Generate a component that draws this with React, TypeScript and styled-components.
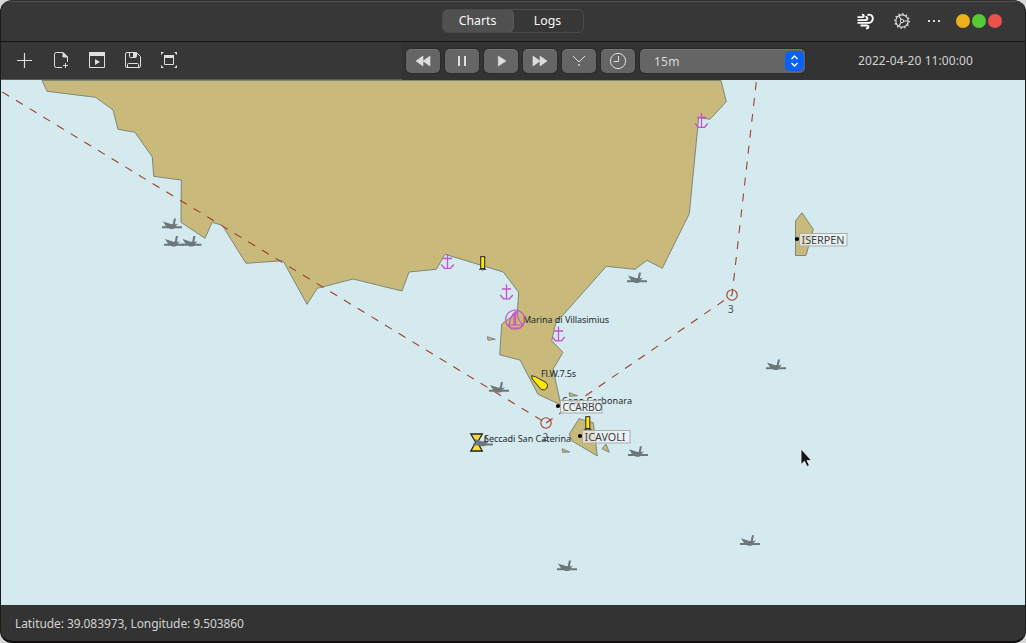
import React from "react";
import styled, { createGlobalStyle } from "styled-components";

const Global = createGlobalStyle`
  html, body { margin: 0; padding: 0; background: #d8d8d8; }
  body { overflow: hidden; font-family: "Noto Sans", sans-serif; font-size: 12px; color: #dcdcdc; }
  svg { display: block; }
`;

const Window = styled.div`
  box-sizing: border-box;
  width: 1026px;
  height: 643px;
  display: flex;
  flex-direction: column;
  background: #333333;
  border: 1px solid #1b1b1b;
  border-top-color: #303030;
  border-bottom: 2px solid #100d0f;
  border-radius: 12px;
  overflow: hidden;
`;

const TitleBar = styled.header`
  box-sizing: border-box;
  height: 41px;
  flex: none;
  display: grid;
  grid-template-columns: 1fr 142px 1fr;
  align-items: center;
  padding-bottom: 1px;
  background: #373737;
  border-top: 1px solid #505050;
  border-bottom: 1px solid #141414;
`;

const Segmented = styled.div`
  grid-column: 2;
  box-sizing: border-box;
  display: flex;
  height: 24px;
  border: 1px solid #4b4b4b;
  border-radius: 6px;
  overflow: hidden;
`;

const Segment = styled.button<{ $active?: boolean }>`
  flex: 1;
  padding: 0 1px 1px 0;
  border: 0;
  font: inherit;
  font-size: 12.3px;
  line-height: 20px;
  color: #fafafa;
  background: ${(p) => (p.$active ? "#505050" : "transparent")};
  border-radius: ${(p) => (p.$active ? "5px" : "0")};
  box-shadow: ${(p) => (p.$active ? "0 0 0 1px #5c5c5c" : "none")};
`;

const TitleActions = styled.div`
  display: flex;
  align-items: center;
  justify-content: flex-end;
  padding-right: 23px;
`;

const Glyph = styled.span<{ $gap: number }>`
  margin-right: ${(p) => p.$gap}px;
`;

const WindowDot = styled.i<{ $color: string }>`
  width: 14px;
  height: 14px;
  margin-left: 2px;
  border-radius: 50%;
  background: ${(p) => p.$color};
`;

const ToolBar = styled.div`
  display: flex;
  flex: none;
  height: 38px;
  background: #333333;
`;

const FileTools = styled.div`
  box-sizing: border-box;
  display: flex;
  align-items: center;
  gap: 18px;
  width: 401px;
  padding: 0 0 1px 15px;
  background: #373737;
  border-bottom: 1px solid #5b5d5d;
`;

const Playback = styled.div`
  display: flex;
  align-items: center;
  gap: 5px;
  padding: 0 0 0 4px;
`;

const PlayButton = styled.button`
  box-sizing: border-box;
  width: 34px;
  height: 24px;
  padding: 0 0 1px;
  display: flex;
  align-items: center;
  justify-content: center;
  border: 0;
  border-top: 1px solid #757575;
  border-radius: 5px;
  background: #656565;
  box-shadow: 0 0 0 1px #2b2b2b;
`;

const Select = styled.div`
  box-sizing: border-box;
  display: flex;
  align-items: center;
  justify-content: space-between;
  width: 165px;
  height: 24px;
  padding: 0 1px 1px 14px;
  border-top: 1px solid #757575;
  border-radius: 5px;
  background: #656565;
  box-shadow: 0 0 0 1px #2b2b2b;
  color: #d8d8d8;
  letter-spacing: 0.2px;
`;

const Stepper = styled.span`
  display: flex;
  align-items: center;
  justify-content: center;
  width: 19px;
  height: 20px;
  border-radius: 5px;
  background: #0a62f5;
`;

const Clock = styled.time`
  align-self: center;
  margin-left: 53px;
  padding-bottom: 2px;
  letter-spacing: 0.08px;
  color: #d2d2d2;
`;

const Chart = styled.main`
  flex: none;
  height: 525px;
  background: #d5eaef;
  font-family: "Noto Sans", sans-serif;
`;

const Status = styled.footer`
  flex: 1;
  display: flex;
  align-items: center;
  padding-left: 14px;
  letter-spacing: -0.08px;
  color: #d2d2d2;
`;

const Icon = ({ children, w = 18, h = 18 }: { children: React.ReactNode; w?: number; h?: number }) => (
  <svg width={w} height={h} viewBox={`0 0 ${w} ${h}`} fill="none" stroke="#dedede" strokeWidth="1">
    {children}
  </svg>
);

const Wreck = ({ x, y }: { x: number; y: number }) => (
  <g transform={`translate(${x} ${y})`} fill="#6c777a">
    <path d="M-10-.8H-6L-9-5.4L-.5-2.8L.8-3L1.9-8.5H4L2.8-2.6L6-3.2L3.6-.8H10V1.2H3L1 2H-2L-3 1.2H-10Z" />
  </g>
);

const Anchor = ({ x, y }: { x: number; y: number }) => (
  <path
    transform={`translate(${x} ${y})`}
    d="M0-7.5V7.3M-4.6-3H4.6M-6.3 3L-3 6.8H3L6.3 3"
    fill="none"
    stroke="#c552c9"
    strokeWidth="1.3"
  />
);

const Beacon = ({ x, y }: { x: number; y: number }) => (
  <g transform={`translate(${x} ${y})`} stroke="#222" strokeWidth="1">
    <path d="M-3.6 13.4H3.6" strokeWidth=".9" />
    <circle cx="0" cy="13" r="1.2" fill="#d5eaef" strokeWidth=".8" />
    <rect x="-2" y=".7" width="4" height="11.8" fill="#ffe800" />
  </g>
);

const Waypoint = ({ x, y, w, textW, name }: { x: number; y: number; w: number; textW: number; name: string }) => (
  <g>
    <circle cx={x} cy={y} r="2.1" fill="#050505" />
    <rect x={x + 2.5} y={y - 5.5} width={w} height="12.5" fill="#f4f4f4" fillOpacity=".7" stroke="#a5adae" strokeWidth="1" />
    <text x={x + 4.5} y={y + 5} fontSize="11.3" fill="#3a4144" textLength={textW} lengthAdjust="spacingAndGlyphs">{name}</text>
  </g>
);

const wrecks = [
  [172, 227], [174, 244.5], [191.5, 244.5], [637, 281], [499, 390.5], [776, 368],
  [750, 543.7], [638, 454.7], [567, 569],
];

const land = [
  "42,80.5 47,91.3 95.7,97.3 113,110 118,129.3 135,132.3 152.3,157 153.7,176.3 181.3,180 181,222.3 205,238.3 212,222.3 222.3,225.3 246,263.3 283,260.7 307,304.3 317.3,288.3 353,279 402,291 409,272 436.3,269.3 445,254.3 503.3,272 518.7,292.3 517.3,312.3 501.7,324 499.7,354.8 520,360 538,394.3 561,405 553,369.3 563,352.3 551.7,340.7 555.7,323.3 606.3,266.3 635,269.3 647,260.3 662.3,268.3 689.3,213.7 698.7,117.7 710,119.3 726.3,101.7 721,80.5",
  "795.5,220.7 802,212.7 813.3,229.3 806,255.5 795.5,255.5",
  "569.3,434 579,418.7 593.3,422.7 597.3,456 571.7,440.7",
  "562,448.7 569.7,452 562.7,452.3",
  "606,444 609.3,452.3 602,448.7",
  "569,392.7 577.7,395.7 569.7,396.3",
  "487.3,336.7 495.3,339.3 488,340.3",
];

export default function App() {
  return (
    <>
      <Global />
      <Window>
        <TitleBar>
          <Segmented>
            <Segment $active>Charts</Segment>
            <Segment>Logs</Segment>
          </Segmented>
          <TitleActions>
            <Glyph $gap={20}>
              <Icon w={17} h={17}>
                <g stroke="#fff" strokeWidth="1.8">
                  <path d="M.5 4.2H5.2Q7 4 6.8 2.6Q6.5 1.4 4.9 1.8" />
                  <path d="M.5 7.2H8.6Q10.6 6.9 10.4 5Q10 3.6 8.4 4" />
                  <path d="M10.4 2.4Q12 1.2 13.8 2Q16 3.2 15.8 6Q15.4 9 12.4 9.8H.5" />
                  <path d="M3.5 12.5H9.8Q11.6 12.8 11.4 14.4Q10.8 15.9 9 15.2" />
                </g>
              </Icon>
            </Glyph>
            <Glyph $gap={16}>
              <Icon w={16} h={16}>
                <circle cx="8" cy="8" r="6.2" strokeWidth="1.2" />
                <circle cx="8" cy="8" r="7.2" strokeDasharray="1.4 2.37" strokeWidth="1.4" />
                <circle cx="8" cy="8" r="1.7" />
                <path d="M9.7 8H14M7.1 6.5L4.8 2.7M7.1 9.5L4.8 13.3" strokeWidth="1.2" />
              </Icon>
            </Glyph>
            <Glyph $gap={12}>
              <Icon w={16} h={4}>
                <path d="M2 2H4M7 2H9M12 2H14" strokeWidth="2" />
              </Icon>
            </Glyph>
            <WindowDot $color="#f0ad1c" />
            <WindowDot $color="#56c936" />
            <WindowDot $color="#ea524b" />
          </TitleActions>
        </TitleBar>
        <ToolBar>
          <FileTools>
            <Icon><path d="M8.5 2V17M1 9.5H16" strokeWidth="1.2" /></Icon>
            <Icon>
              <path d="M10 16.5H4.5Q2.5 16.5 2.5 14.5V3.5Q2.5 1.5 4.5 1.5H11L15.5 6V11M13.5 12V17M11 14.5H16" />
              <path d="M11 1.5V6H15.5Z" fill="#dedede" />
            </Icon>
            <Icon>
              <path d="M1.5 2.5H16.5V16.5H1.5Z" />
              <path d="M1 1H17V5H1ZM7 8V14L12 11Z" fill="#dedede" stroke="none" />
            </Icon>
            <Icon>
              <path d="M3 1.5H12.5L16.5 5.5V15Q16.5 16.5 15 16.5H3Q1.5 16.5 1.5 15V3Q1.5 1.5 3 1.5ZM5.5 1.5V5.5Q5.5 6.5 6.5 6.5H11.5Q12.5 6.5 12.5 5.5V1.5M3.5 16V13.5Q3.5 12.5 4.5 12.5H13.5Q14.5 12.5 14.5 13.5V16" />
              <path d="M9 2H12V6H9Z" fill="#dedede" stroke="none" />
            </Icon>
            <Icon>
              <path d="M4.5 4.5H13.5V13.5H4.5Z" />
              <path d="M4 4H14V7H4ZM1 1H4L1 4ZM17 1V4L14 1ZM1 17V14L4 17ZM17 17H14L17 14Z" fill="#dedede" stroke="none" />
            </Icon>
          </FileTools>
          <Playback>
            <PlayButton><Icon><path d="M9 4V14L2 9ZM16 4V14L9 9Z" fill="#dedede" stroke="#dedede" strokeWidth=".6" /></Icon></PlayButton>
            <PlayButton><Icon><path d="M6 4V14M12 4V14" strokeWidth="2" /></Icon></PlayButton>
            <PlayButton><Icon><path d="M6.3 4V14L14 9Z" fill="#dedede" stroke="#dedede" strokeWidth=".6" /></Icon></PlayButton>
            <PlayButton><Icon><path d="M2 4V14L9 9ZM9 4V14L16 9Z" fill="#dedede" stroke="#dedede" strokeWidth=".6" /></Icon></PlayButton>
            <PlayButton><Icon><path d="M3 4L9 10L15 4" /><circle cx="9" cy="13" r=".9" fill="#dedede" stroke="none" /></Icon></PlayButton>
            <PlayButton><Icon><circle cx="9" cy="9" r="7.6" /><path d="M9.5 4V9.5H4.5" /></Icon></PlayButton>
            <Select>
              15m
              <Stepper><Icon w={9} h={14}><path d="M1.5 5L4.5 2L7.5 5M1.5 9L4.5 12L7.5 9" stroke="#fff" strokeWidth="1.4" /></Icon></Stepper>
            </Select>
          </Playback>
          <Clock>2022-04-20 11:00:00</Clock>
        </ToolBar>
        <Chart>
          <svg width="1024" height="525" viewBox="1 80 1024 525">
            {land.map((points) => (
              <polygon key={points} points={points} fill="#c9b97a" stroke="#7d877b" strokeWidth="1" />
            ))}
            <g fill="#23282a" fontSize="9">
              <text x="523" y="323" textLength="86">Marina di Villasimius</text>
              <text x="541" y="377" textLength="35">Fl.W.7.5s</text>
              <text x="562" y="404" textLength="70">Capo Carbonara</text>
            </g>
            <g fill="none" stroke="#a13f29" strokeWidth="1.1">
              <path d="M2.3 92L546 423" strokeDasharray="8 8" />
              <path d="M546 423L732 295L756.5 80" strokeDasharray="8 8" />
              <circle cx="546" cy="423" r="5.2" />
              <circle cx="732" cy="295" r="5.2" />
            </g>
            {wrecks.map(([x, y]) => <Wreck key={`${x}-${y}`} x={x} y={y} />)}
            <Anchor x={447.5} y={261.5} />
            <Anchor x={506.5} y={292} />
            <Anchor x={558.5} y={334} />
            <Anchor x={701.5} y={120.5} />
            <g fill="none" stroke="#c552c9" strokeWidth="1.2">
              <circle cx="515.2" cy="319.6" r="9.6" />
              <path d="M515.5 311V325M514 313Q509 319 509.5 325H514ZM517 311Q517 320 523 324.5M508 325H523L520.5 328H511Z" />
            </g>
            <Beacon x={482.7} y={256} />
            <Beacon x={587.8} y={416} />
            <path d="M531.5 375.7L535.5 376.7L546 382.5Q548.7 385 547 388Q544.8 391 541 389.5L532.3 379Z" fill="#ffe800" stroke="#333" />
            <path d="M470.8 434H482.3L477.5 442.2L482.3 451H470.8L475.7 442.2Z" fill="#fbd93c" stroke="#222" strokeWidth="1.3" />
            <Wreck x={483} y={444.2} />
            <text x="484" y="442" fontSize="9" fill="#23282a" textLength="87">Seccadi San Caterina</text>
            <g fontSize="10" fill="#454e52">
              <text x="542.5" y="441">2</text>
              <text x="728" y="313">3</text>
            </g>
            <Waypoint x={797} y={239} w={47.5} textW={43} name="ISERPEN" />
            <Waypoint x={558} y={406} w={41.5} textW={40} name="CCARBO" />
            <Waypoint x={580} y={436} w={47.5} textW={41} name="ICAVOLI" />
            <path d="M801 449V464.5L804.5 461.3L807 466.6L809.4 465.4L807 460.5H811.5Z" fill="#151515" stroke="#eef5f7" strokeWidth=".8" />
          </svg>
        </Chart>
        <Status>Latitude: 39.083973, Longitude: 9.503860</Status>
      </Window>
    </>
  );
}
